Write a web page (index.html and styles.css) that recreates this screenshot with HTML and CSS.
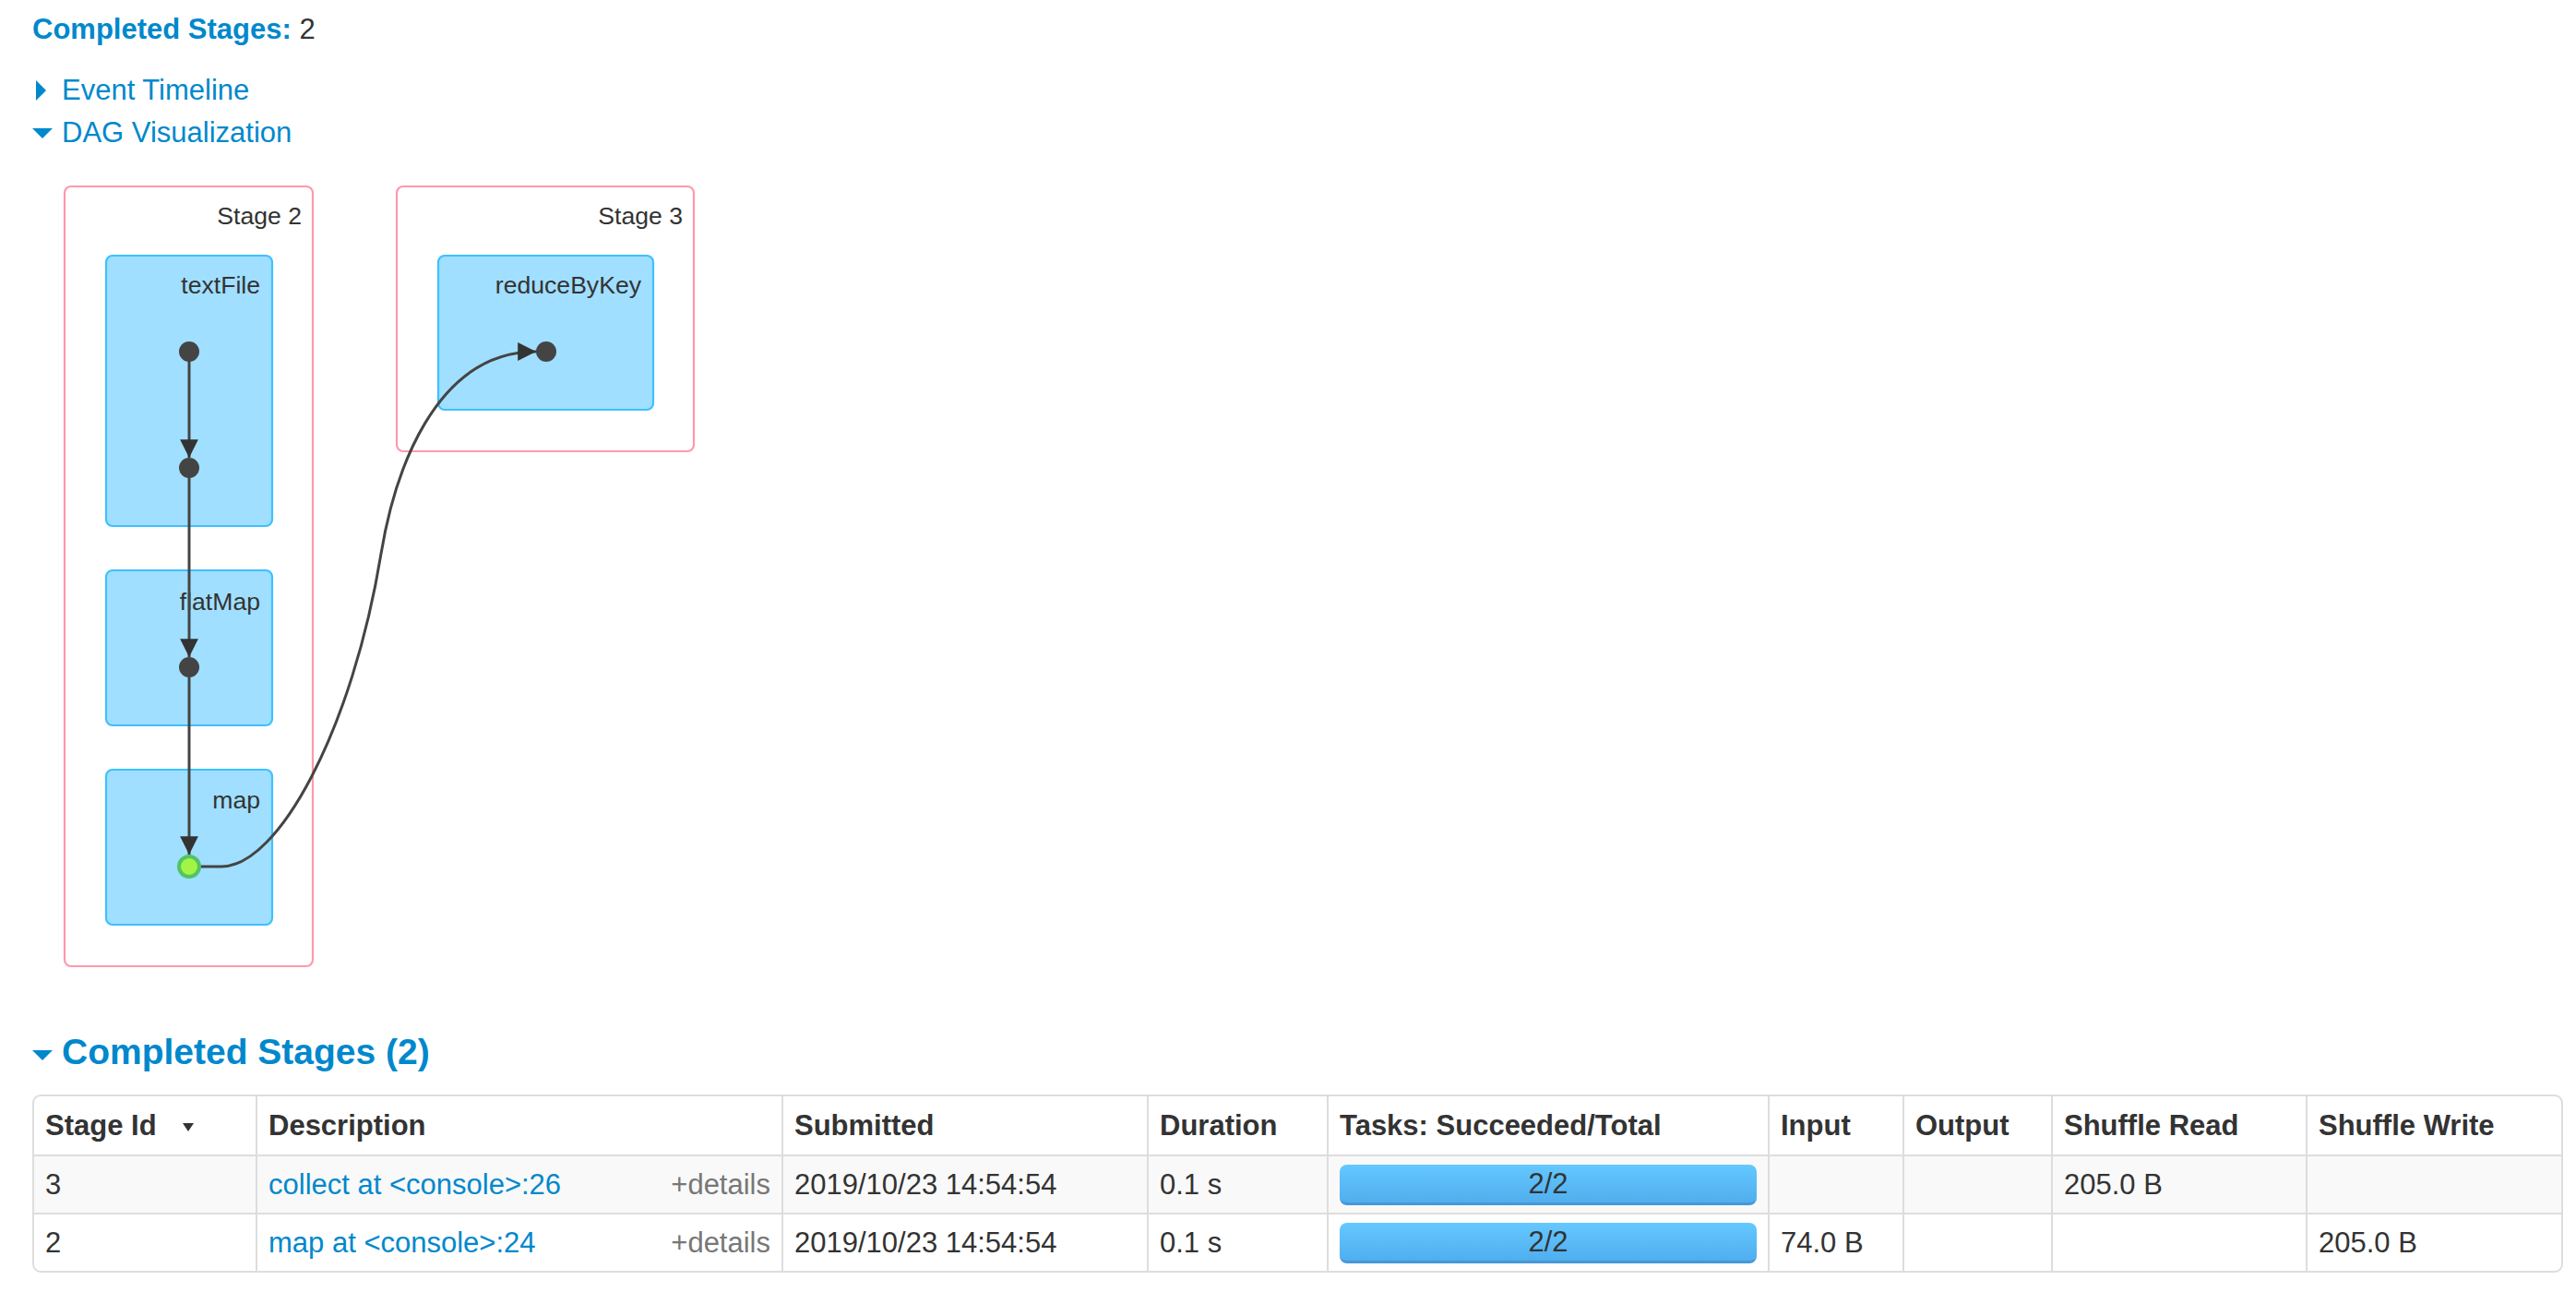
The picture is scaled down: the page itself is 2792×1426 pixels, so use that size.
FILE: index.html
```html
<!DOCTYPE html>
<html lang="en">
<head>
  <meta charset="UTF-8" />
  <title>Spark Jobs - Details for Job</title>
  <link rel="stylesheet" href="styles.css">
</head>
<body>
  <ul class="summary">
    <li><a class="summary-label">Completed Stages:</a> 2</li>
  </ul>

  <div class="toggle first">
    <span class="arrow-box"><span class="arrow-closed"></span></span>
    <a>Event Timeline</a>
  </div>
  <div class="toggle">
    <span class="arrow-box"><span class="arrow-open"></span></span>
    <a>DAG Visualization</a>
  </div>

  <svg class="dag" width="800" height="900" viewBox="35 167 800 900">
    <defs>
      <marker id="arrow" viewBox="0 0 10 10" refX="10" refY="5" markerWidth="6.6" markerHeight="6.6" markerUnits="strokeWidth" orient="auto">
        <path d="M0 0 L10 5 L0 10 z" fill="#333"></path>
      </marker>
    </defs>

    <!-- stage clusters -->
    <rect class="stage" x="70" y="202" width="269" height="845" rx="7"></rect>
    <text class="label" x="327" y="243">Stage 2</text>
    <rect class="stage" x="430" y="202" width="322" height="287" rx="7"></rect>
    <text class="label" x="740" y="243">Stage 3</text>

    <!-- operation scopes -->
    <rect class="scope" x="115" y="277" width="180" height="293" rx="7"></rect>
    <text class="label" x="282" y="318">textFile</text>
    <rect class="scope" x="115" y="618" width="180" height="168" rx="7"></rect>
    <text class="label" x="282" y="661">flatMap</text>
    <rect class="scope" x="115" y="834" width="180" height="168" rx="7"></rect>
    <text class="label" x="282" y="876">map</text>
    <rect class="scope" x="475" y="277" width="233" height="167" rx="7"></rect>
    <text class="label" x="695" y="318">reduceByKey</text>

    <!-- edges -->
    <path class="edge" d="M205 381 L205 496" marker-end="url(#arrow)"></path>
    <path class="edge" d="M205 507 L205 712" marker-end="url(#arrow)"></path>
    <path class="edge" d="M205 723 L205 926" marker-end="url(#arrow)"></path>
    <path class="edge" d="M217 939 L240 939 C302 939, 382 790, 413 600 C427 515, 470 381, 581 381" marker-end="url(#arrow)"></path>

    <!-- rdd nodes -->
    <circle class="node" cx="205" cy="381" r="11"></circle>
    <circle class="node" cx="205" cy="507" r="11"></circle>
    <circle class="node" cx="205" cy="723" r="11"></circle>
    <circle class="node cached" cx="205" cy="939" r="11"></circle>
    <circle class="node" cx="592" cy="381" r="11"></circle>
  </svg>

  <h4 class="section">
    <span class="arrow-box"><span class="arrow-open"></span></span>
    <a>Completed Stages (2)</a>
  </h4>

  <table class="stages">
    <colgroup>
      <col style="width: 240px">
      <col style="width: 570px">
      <col style="width: 396px">
      <col style="width: 195px">
      <col style="width: 478px">
      <col style="width: 146px">
      <col style="width: 161px">
      <col style="width: 276px">
      <col style="width: 277px">
    </colgroup>
    <thead>
      <tr>
        <th>Stage Id <span class="sort-arrow"></span></th>
        <th>Description</th>
        <th>Submitted</th>
        <th>Duration</th>
        <th>Tasks: Succeeded/Total</th>
        <th>Input</th>
        <th>Output</th>
        <th>Shuffle Read</th>
        <th>Shuffle Write</th>
      </tr>
    </thead>
    <tbody>
      <tr class="odd">
        <td>3</td>
        <td><div class="desc"><a class="name-link">collect at &lt;console&gt;:26</a><span class="expand-details">+details</span></div></td>
        <td>2019/10/23 14:54:54</td>
        <td>0.1 s</td>
        <td><div class="progress"><span>2/2</span></div></td>
        <td></td>
        <td></td>
        <td>205.0 B</td>
        <td></td>
      </tr>
      <tr>
        <td>2</td>
        <td><div class="desc"><a class="name-link">map at &lt;console&gt;:24</a><span class="expand-details">+details</span></div></td>
        <td>2019/10/23 14:54:54</td>
        <td>0.1 s</td>
        <td><div class="progress"><span>2/2</span></div></td>
        <td>74.0 B</td>
        <td></td>
        <td></td>
        <td>205.0 B</td>
      </tr>
    </tbody>
  </table>
</body>
</html>
```

FILE: styles.css
```css
* {
  box-sizing: border-box;
}

body {
  margin: 0;
  padding: 0 14px 0 35px;
  font-family: "Liberation Sans", Arial, Helvetica, sans-serif;
  font-size: 31px;
  color: #333;
  background: #fff;
}

a {
  color: #0088cc;
  text-decoration: none;
}

.summary {
  list-style: none;
  margin: 0;
  padding: 10px 0 0 0;
  line-height: 44px;
}

.summary-label {
  font-weight: bold;
}

.toggle {
  display: flex;
  align-items: center;
  height: 46px;
  line-height: 46px;
}

.toggle.first {
  margin-top: 21px;
}

.arrow-box {
  width: 32px;
  display: flex;
  align-items: center;
}

.arrow-closed {
  width: 0;
  height: 0;
  margin-left: 4px;
  border-top: 11px solid transparent;
  border-bottom: 11px solid transparent;
  border-left: 11px solid #0088cc;
}

.arrow-open {
  width: 0;
  height: 0;
  border-left: 11px solid transparent;
  border-right: 11px solid transparent;
  border-top: 11px solid #0088cc;
}

/* DAG */
.dag {
  display: block;
}

.dag .stage {
  fill: #fff;
  stroke: #ff99ac;
  stroke-width: 2.2;
}

.dag .scope {
  fill: #a0dfff;
  stroke: #3ec0ff;
  stroke-width: 2.2;
}

.dag .label {
  font-family: "Liberation Sans", Arial, sans-serif;
  font-size: 26.6px;
  fill: #333;
  text-anchor: end;
}

.dag .edge {
  fill: none;
  stroke: #444;
  stroke-width: 3;
}

.dag .node {
  fill: #444;
}

.dag .node.cached {
  fill: #a3f545;
  stroke: #52c366;
  stroke-width: 4;
}

/* completed stages */
.section {
  display: flex;
  align-items: center;
  margin: 51px 0 0 0;
  height: 44px;
  line-height: 44px;
  font-size: 39px;
  font-weight: bold;
}

.section .arrow-open {
  margin-top: 6px;
}

.stages {
  width: 100%;
  margin-top: 24px;
  table-layout: fixed;
  border-collapse: separate;
  border-spacing: 0;
  border: 2px solid #ddd;
  border-radius: 9px;
}

.stages th,
.stages td {
  height: 63px;
  padding: 0 12px;
  text-align: left;
  vertical-align: middle;
  white-space: nowrap;
  border-left: 2px solid #ddd;
}

.stages th:first-child,
.stages td:first-child {
  border-left: none;
}

.stages th {
  font-weight: bold;
}

.stages td {
  border-top: 2px solid #ddd;
}

.stages tr.odd td {
  background: #f9f9f9;
}

.sort-arrow {
  display: inline-block;
  width: 0;
  height: 0;
  margin-left: 20px;
  vertical-align: middle;
  border-left: 6px solid transparent;
  border-right: 6px solid transparent;
  border-top: 9px solid #333;
}

.desc {
  display: flex;
  justify-content: space-between;
}

.expand-details {
  color: #777;
}

.progress {
  height: 44px;
  border-radius: 8px;
  background: linear-gradient(#64c8ff, #50aeee);
  border-bottom: 3px solid #4898d6;
  text-align: center;
  line-height: 42px;
  color: #333;
}
```
